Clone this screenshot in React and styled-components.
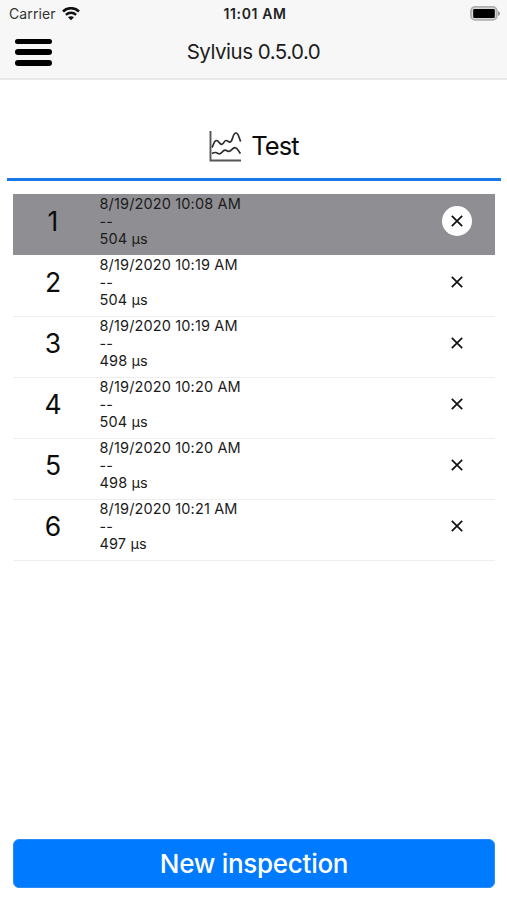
import React, { useState } from "react";
import styled, { createGlobalStyle } from "styled-components";

const GlobalStyle = createGlobalStyle`
  * {
    box-sizing: border-box;
  }
  body {
    margin: 0;
    background-color: #fff;
    color: #0c0c0c;
    font-family: Inter, "Liberation Sans", sans-serif;
  }
  button {
    font-family: inherit;
    color: inherit;
  }
`;
const Screen = styled.div`
  width: 100%;
  height: 900px;
  display: flex;
  flex-direction: column;
  overflow: hidden;
`;
const Header = styled.header`
  flex: 0 0 80px;
  background-color: #f7f7f7;
  border-bottom: 2px solid #e8e8e8;
`;
const StatusBar = styled.div`
  height: 27px;
  padding: 0 6px 0 9px;
  display: grid;
  grid-template-columns: 1fr auto 1fr;
  align-items: center;
`;
const Carrier = styled.div`
  display: flex;
  align-items: center;
  gap: 6px;
  color: #333;
  font-size: 14px;
  letter-spacing: 0.12px;
`;
const Clock = styled.div`
  color: #222;
  font-size: 14px;
  font-weight: 600;
  letter-spacing: 0.6px;
`;
const Battery = styled.svg`
  justify-self: end;
`;
const NavBar = styled.div`
  height: 49px;
  padding: 0 15px;
  display: grid;
  grid-template-columns: 1fr auto 1fr;
  align-items: center;
`;
const MenuButton = styled.button`
  width: 38px;
  height: 27px;
  margin-top: 1px;
  padding: 0;
  border: none;
  background: none;
  display: flex;
  flex-direction: column;
  justify-content: space-between;
`;
const MenuLine = styled.span`
  width: 37px;
  height: 5.5px;
  border-radius: 3px;
  background-color: #000;
`;
const NavTitle = styled.h1`
  margin: 0;
  color: #1c1c1c;
  font-size: 20.5px;
  font-weight: 400;
  letter-spacing: -0.5px;
`;
const Content = styled.main`
  flex: 1;
  padding: 0 6px 0 7px;
  display: flex;
  flex-direction: column;
`;
const SectionTitle = styled.div`
  height: 101px;
  padding-top: 33px;
  border-bottom: 3px solid #1878e8;
  display: flex;
  align-items: center;
  justify-content: center;
  gap: 9px;
  font-size: 25.5px;
  letter-spacing: -0.9px;

  svg {
    margin-top: 2px;
  }
`;
const List = styled.ul`
  margin: 13px 6px 0;
  padding: 0;
  list-style: none;
`;
const Row = styled.li`
  height: 61px;
  display: grid;
  grid-template-columns: 80px 1fr 77px;
  background-color: ${(props) => (props.$selected ? "#8f8e93" : "transparent")};
  box-shadow: ${(props) => (props.$selected ? "none" : "0 1px 0 #eee")};
`;
const RowNumber = styled.div`
  height: 54px;
  display: flex;
  align-items: center;
  justify-content: center;
  font-size: 26.5px;
`;
const RowDetails = styled.div`
  padding: 1.3px 0 0 6.5px;
  color: #1b1b1b;
  font-size: 14.5px;
  line-height: 17.6px;
  letter-spacing: 0.14px;
`;
const RemoveButton = styled.button`
  width: 30px;
  height: 30px;
  margin: 12.3px auto 0 23.5px;
  padding: 0;
  border: none;
  border-radius: 50%;
  background-color: #fff;
  display: flex;
  align-items: center;
  justify-content: center;
`;
const NewButton = styled.button`
  height: 49px;
  margin: auto 6px 12px;
  border: 1px solid #2b8bf5;
  border-radius: 6px;
  background-color: #007aff;
  color: #fff;
  font-size: 26px;
  font-weight: 500;
  letter-spacing: -0.27px;
`;

const inspections = [
  { id: 1, date: "8/19/2020 10:08 AM", note: "--", time: "504 µs" },
  { id: 2, date: "8/19/2020 10:19 AM", note: "--", time: "504 µs" },
  { id: 3, date: "8/19/2020 10:19 AM", note: "--", time: "498 µs" },
  { id: 4, date: "8/19/2020 10:20 AM", note: "--", time: "504 µs" },
  { id: 5, date: "8/19/2020 10:20 AM", note: "--", time: "498 µs" },
  { id: 6, date: "8/19/2020 10:21 AM", note: "--", time: "497 µs" },
];

function WifiIcon() {
  return (
    <svg width="18" height="14" viewBox="0 0 18 14" fill="none" stroke="#111">
      <path d="M1 4.4C5.4.2 12.6.2 17 4.4" strokeWidth="2.7" />
      <path d="M3.9 7.800c2.900-2.700 7.300-2.700 10.200 0" strokeWidth="2.400" />
      <path d="M9 13.200 6 10.300c1.700-1.500 4.300-1.500 6 0z" fill="#111" stroke="none" />
    </svg>
  );
}
function BatteryIcon() {
  return (
    <Battery width="31" height="15" viewBox="0 0 31 15">
      <rect x="1" y=".9" width="25.8" height="13" rx="4" fill="#d8d8d8" stroke="#b0b0b0" strokeWidth="1.8" />
      <rect x="3.2" y="3" width="21.600" height="9" rx="1.2" fill="#000" />
      <path d="M28 5c2.600.8 2.600 4.200 0 5z" fill="#999" />
    </Battery>
  );
}
function ChartIcon() {
  return (
    <svg width="33" height="31" viewBox="0 0 33 31" fill="none" stroke="#2c2c2c" strokeWidth="1.7">
      <path d="M1.500 0v29.500H32" strokeWidth="1.900" stroke="#555" />
      <path d="M3 16.500C5 13 5 9.500 7.500 9.500s3 4.500 5.500 3.800c2-.6 2-3.800 4.300-3.800 2 0 2 2.200 4 1.500C24 10 23.500 2 27 2c2.500 0 2.800 5 4.700 8.500" />
      <path d="M3 22.500c2.500-1.500 4-1.500 6 0 4 2 4-3.300 7-3.300 2.500 0 3 2 5 .8 1.700-1 2.800-3.300 5-3.300 2.700 0 3.500 4 5.500 5.800" />
    </svg>
  );
}
function InspectionRow(props) {
  const { item, selected, onSelect, onRemove } = props;

  const onRemoveClicked = (e) => {
    e.stopPropagation();
    onRemove(item.id);
  };
  return (
    <Row $selected={selected} onClick={() => onSelect(item.id)}>
      <RowNumber>{item.id}</RowNumber>
      <RowDetails>
        <div>{item.date}</div>
        <div>{item.note}</div>
        <div>{item.time}</div>
      </RowDetails>
      <RemoveButton aria-label="Remove" onClick={onRemoveClicked}>
        <svg width="12" height="12" viewBox="0 0 12 12" stroke="#111" strokeWidth="1.7">
          <path d="m.8.8 10.400 10.400m0-10.400L.8 11.200" />
        </svg>
      </RemoveButton>
    </Row>
  );
}
export default function App() {
  const [items, setItems] = useState(inspections);
  const [selected, setSelected] = useState(1);

  const onRemove = (id) => {
    setItems(items.filter((item) => item.id !== id));
  };

  return (
    <Screen>
      <GlobalStyle />
      <Header>
        <StatusBar>
          <Carrier>
            Carrier
            <WifiIcon />
          </Carrier>
          <Clock>11:01 AM</Clock>
          <BatteryIcon />
        </StatusBar>
        <NavBar>
          <MenuButton aria-label="Menu">
            <MenuLine />
            <MenuLine />
            <MenuLine />
          </MenuButton>
          <NavTitle>Sylvius 0.5.0.0</NavTitle>
        </NavBar>
      </Header>
      <Content>
        <SectionTitle>
          <ChartIcon />
          Test
        </SectionTitle>
        <List>
          {items.map((item) => (
            <InspectionRow
              key={item.id}
              item={item}
              selected={item.id === selected}
              onSelect={setSelected}
              onRemove={onRemove}
            />
          ))}
        </List>
        <NewButton>New inspection</NewButton>
      </Content>
    </Screen>
  );
}
